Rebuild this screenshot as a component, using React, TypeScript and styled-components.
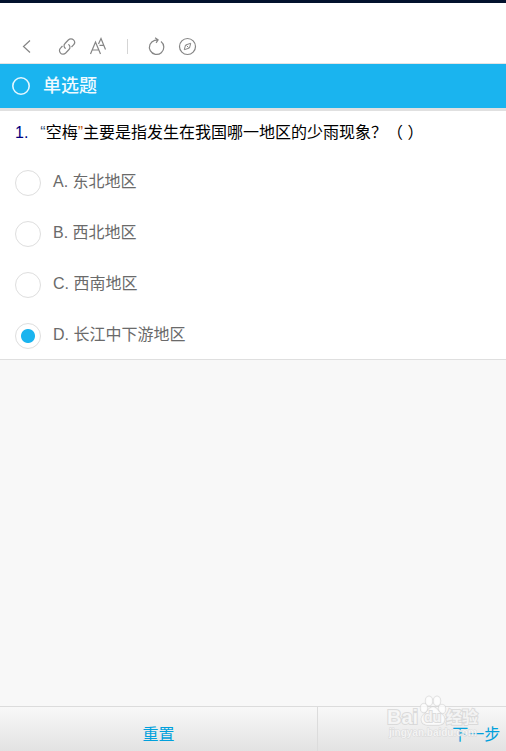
import React, { useState } from "react";
import styled, { createGlobalStyle } from "styled-components";

const GlobalStyle = createGlobalStyle`
  *, *::before, *::after { box-sizing: border-box; }
  body {
    margin: 0;
    background: #f8f8f8;
    font-family: "Liberation Sans", "Noto Sans CJK SC", sans-serif;
    font-size: 16px;
    line-height: 24px;
    text-spacing-trim: space-all;
  }
`;

const Page = styled.div`
  display: flex;
  flex-direction: column;
  min-height: 100vh;
  overflow: hidden;
  border-top: 3px solid #02112d;
`;

const Toolbar = styled.nav`
  display: flex;
  align-items: center;
  height: 61px;
  padding: 26px 16px 0;
  gap: 9px;
  background: #fff;
  border-bottom: 1px solid #e4e4e4;
`;

const ToolButton = styled.button<{ $spaced?: boolean }>`
  display: flex;
  padding: 0;
  margin-right: ${(p) => (p.$spaced ? "9px" : "0")};
  border: 0;
  background: none;
  cursor: pointer;

  svg {
    display: block;
    width: 22px;
    height: 22px;
    fill: none;
    stroke: #858585;
    stroke-width: 1.2;
  }
`;

const Divider = styled.span`
  width: 1px;
  height: 15px;
  margin: 0 9px;
  background: #d5d5d5;
`;

const SectionHeader = styled.header`
  display: flex;
  align-items: center;
  gap: 13px;
  height: 47px;
  padding: 0 12px;
  background: #1ab4ef;
  border-bottom: 3px solid #e0e0e0;
`;

const Ring = styled.svg`
  width: 18px;
  height: 18px;
  fill: none;
  stroke: #e4f7ff;
  stroke-width: 1.6;
`;

const SectionTitle = styled.h1`
  margin: 0;
  font-size: 18px;
  font-weight: 500;
  color: #effaff;
`;

const QuestionForm = styled.form`
  margin: 0;
  padding: 10px 15px;
  background: #fff;
  border-bottom: 1px solid #dfdfdf;
`;

const Question = styled.h2`
  display: flex;
  gap: 12px;
  margin: 0 0 25px;
  font-size: 16px;
  font-weight: 400;
  color: #000;
`;

const QuestionNumber = styled.span`
  color: #000080;
`;

const Quote = styled.span<{ $tone: string }>`
  color: ${(p) => p.$tone};
`;

const OptionList = styled.div`
  display: grid;
  gap: 25px;
`;

const Option = styled.label`
  display: flex;
  gap: 12px;
  color: #6a6a6a;
  cursor: pointer;
`;

const Radio = styled.input`
  appearance: none;
  flex: none;
  width: 26px;
  height: 26px;
  margin: 0;
  border: 1px solid #dedede;
  border-radius: 50%;
  background: #fff;

  &:checked {
    background: radial-gradient(circle, #1ab4ef 6.5px, #fff 7.5px);
  }
`;

const Footer = styled.footer`
  position: relative;
  display: flex;
  height: 45px;
  margin-top: auto;
  border-top: 1px solid #dcdcdc;
  background: linear-gradient(#f8f8f8, #e2e2e2);
`;

const FooterButton = styled.button`
  flex: 0 0 62.8%;
  padding: 12px 0 0;
  border: 0;
  border-right: 1px solid #dcdcdc;
  background: none;
  color: #00a0dc;
  font: inherit;
  cursor: pointer;
`;

const Watermark = styled.svg`
  position: absolute;
  right: 24px;
  bottom: 8px;
  width: 98px;
  height: 50px;
  pointer-events: none;
  fill: #fff;
  fill-opacity: 0.7;
  stroke: #d0d0d0;
  stroke-opacity: 0.7;
  paint-order: stroke;
  font-family: "Liberation Sans", "Noto Sans CJK SC", sans-serif;
  font-weight: 700;
`;

const options = [
  "A. 东北地区",
  "B. 西北地区",
  "C. 西南地区",
  "D. 长江中下游地区",
];

export default function App() {
  const [selected, setSelected] = useState<number | null>(3);

  return (
    <>
      <GlobalStyle />
      <Page>
        <Toolbar aria-label="工具栏">
          <ToolButton type="button" aria-label="返回" $spaced>
            <svg viewBox="0 0 22 22">
              <path d="M14 5.500 7.500 11.500l6.500 6" />
            </svg>
          </ToolButton>
          <ToolButton type="button" aria-label="链接">
            <svg viewBox="0 0 22 22">
              <path d="M9.8 13.500C8 13 7.300 10.200 9 8.500l3.300-3.500c1.500-1.500 3.800-1.500 5.200-.1s1.400 3.600 0 5L15.500 12M12.200 9.500c1.800.500 2.500 3.300.8 5l-3.300 3.500c-1.500 1.500-3.800 1.500-5.200.100s-1.400-3.600 0-5L6.500 11" />
            </svg>
          </ToolButton>
          <ToolButton type="button" aria-label="字体大小">
            <svg viewBox="0 0 22 22">
              <path d="M3.500 19 8.500 7l5 12M5.300 15h6.500M11.500 9 14 3.500l4.500 11M12.500 10.300h4" />
            </svg>
          </ToolButton>
          <Divider />
          <ToolButton type="button" aria-label="刷新">
            <svg viewBox="0 0 22 22">
              <path d="M15 6.500a7.200 7.200 0 1 1-6.400-1.200l3.500-.4M9.100 2.800l3 2.100L10.100 7.800" />
            </svg>
          </ToolButton>
          <ToolButton type="button" aria-label="浏览">
            <svg viewBox="0 0 22 22">
              <circle cx="10.500" cy="11.500" r="8" />
              <path d="m13.700 8.300-1.200 4.700-5.200 1.700 1.200-4.700ZM9.500 10.500l2 2" strokeWidth="1" />
            </svg>
          </ToolButton>
        </Toolbar>

        <SectionHeader>
          <Ring viewBox="0 0 18 18">
            <circle cx="9" cy="9" r="8.200" />
          </Ring>
          <SectionTitle>单选题</SectionTitle>
        </SectionHeader>

        <QuestionForm>
          <Question>
            <QuestionNumber>1.</QuestionNumber>
            <span>
              <Quote $tone="#36547c">“</Quote>空梅<Quote $tone="#c45a10">”</Quote>
              主要是指发生在我国哪一地区的少雨现象？（ ）
            </span>
          </Question>
          <OptionList role="radiogroup">
            {options.map((text, i) => (
              <Option key={text}>
                <Radio
                  type="radio"
                  name="answer"
                  checked={selected === i}
                  onChange={() => setSelected(i)}
                />
                <span>{text}</span>
              </Option>
            ))}
          </OptionList>
        </QuestionForm>

        <Footer>
          <FooterButton type="button" onClick={() => setSelected(null)}>
            重置
          </FooterButton>
          <FooterButton type="button">下一步</FooterButton>
          <Watermark viewBox="0 0 98 50">
            <text x="3" y="31" fontSize="20" strokeWidth="2">Bai</text>
            <g strokeWidth="1.500">
              <ellipse cx="40" cy="15" rx="3.500" ry="4.500" />
              <ellipse cx="45" cy="8" rx="3.500" ry="4.800" />
              <ellipse cx="53" cy="8" rx="3.500" ry="4.800" />
              <ellipse cx="58" cy="16" rx="3.500" ry="4.500" />
              <path d="M49 14c-3 0-4.500 2.500-6.500 5-2.500 2.500-6 4-5 8.500 1 5 6 4.500 11.500 4.500s10.500.5 11.500-4.500c1-4.500-2.500-6-5-8.500-2-2.500-3.500-5-6.500-5Z" />
            </g>
            <text x="40" y="29" fontSize="14" strokeWidth="2">du</text>
            <text x="62" y="30" fontSize="16" strokeWidth="2">经验</text>
            <text x="5" y="43" fontSize="10" strokeWidth="1">jingyan.baidu.com</text>
          </Watermark>
        </Footer>
      </Page>
    </>
  );
}
